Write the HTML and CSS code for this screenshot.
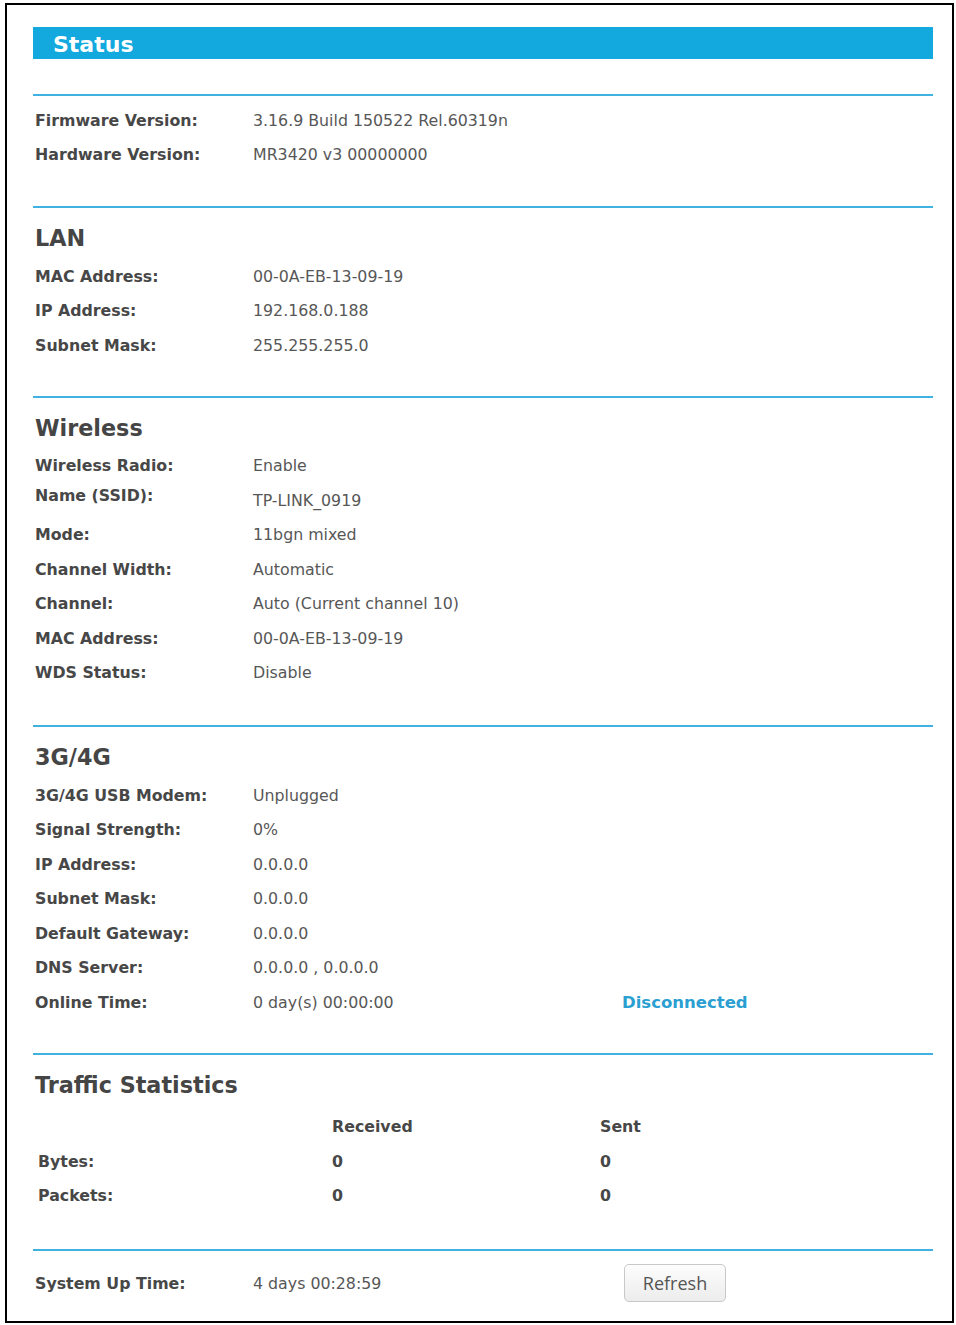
FILE: index.html
```html
<html>
<head><title>Status</title>
<meta content="text/html;charset=utf-8" http-equiv="Content-Type" />
<link rel="stylesheet" href="styles.css">
</head>
<body>
<div class="frame">
	<div class="title-bar">Status</div>

	<div class="section plain">
		<div class="row"><span class="lbl">Firmware Version:</span><span class="val">3.16.9 Build 150522 Rel.60319n</span></div>
		<div class="row"><span class="lbl">Hardware Version:</span><span class="val">MR3420 v3 00000000</span></div>
	</div>

	<div class="section">
		<h2>LAN</h2>
		<div class="row"><span class="lbl">MAC Address:</span><span class="val">00-0A-EB-13-09-19</span></div>
		<div class="row"><span class="lbl">IP Address:</span><span class="val">192.168.0.188</span></div>
		<div class="row"><span class="lbl">Subnet Mask:</span><span class="val">255.255.255.0</span></div>
	</div>

	<div class="section wide">
		<h2>Wireless</h2>
		<div class="row"><span class="lbl">Wireless Radio:</span><span class="val">Enable</span></div>
		<div class="row"><span class="lbl raised">Name (SSID):</span><span class="val">TP-LINK_0919</span></div>
		<div class="row"><span class="lbl">Mode:</span><span class="val">11bgn mixed</span></div>
		<div class="row"><span class="lbl">Channel Width:</span><span class="val">Automatic</span></div>
		<div class="row"><span class="lbl">Channel:</span><span class="val">Auto (Current channel 10)</span></div>
		<div class="row"><span class="lbl">MAC Address:</span><span class="val">00-0A-EB-13-09-19</span></div>
		<div class="row"><span class="lbl">WDS Status:</span><span class="val">Disable</span></div>
	</div>

	<div class="section">
		<h2>3G/4G</h2>
		<div class="row"><span class="lbl">3G/4G USB Modem:</span><span class="val">Unplugged</span></div>
		<div class="row"><span class="lbl">Signal Strength:</span><span class="val">0%</span></div>
		<div class="row"><span class="lbl">IP Address:</span><span class="val">0.0.0.0</span></div>
		<div class="row"><span class="lbl">Subnet Mask:</span><span class="val">0.0.0.0</span></div>
		<div class="row"><span class="lbl">Default Gateway:</span><span class="val">0.0.0.0</span></div>
		<div class="row"><span class="lbl">DNS Server:</span><span class="val">0.0.0.0 , 0.0.0.0</span></div>
		<div class="row"><span class="lbl">Online Time:</span><span class="val">0 day(s) 00:00:00</span><span class="state">Disconnected</span></div>
	</div>

	<div class="section traffic">
		<h2>Traffic Statistics</h2>
		<div class="stats">
			<span></span><span class="lbl">Received</span><span class="lbl">Sent</span>
			<span class="lbl">Bytes:</span><span class="lbl">0</span><span class="lbl">0</span>
			<span class="lbl">Packets:</span><span class="lbl">0</span><span class="lbl">0</span>
		</div>
	</div>

	<div class="section uptime">
		<div class="row"><span class="lbl">System Up Time:</span><span class="val">4 days 00:28:59</span><span><button onclick="location.reload()">Refresh</button></span></div>
	</div>
</div>
</body>
</html>
```

FILE: styles.css
```css
body{
	padding:0;
	margin:0;
	background-color:#fff;
	font-family:"DejaVu Sans", Verdana, sans-serif;
	color:#555;
}

.frame{
	margin:3px 2px 2px 5px;
	border:2px solid #000;
	padding:22px 19px 19px 26px;
}

.title-bar{
	background-color:#13a8de;
	color:#fff;
	font-weight:bold;
	font-size:22px;
	height:30px;
	line-height:32px;
	padding:2px 0 0 20px;
}

.section{
	border-top:2px solid #3fb2e2;
	padding:15px 0 33px 0;
}

.section.plain{
	margin-top:35px;
	padding-top:7px;
	padding-bottom:34px;
}

.section.wide{
	padding-bottom:35px;
}

h2{
	margin:0 0 6px 2px;
	font-size:22.3px;
	line-height:30px;
	color:#454545;
}

.row{
	display:grid;
	grid-template-columns:218px 369px auto;
	align-items:center;
	height:34.5px;
	padding-left:2px;
}

.lbl{
	font-weight:bold;
	font-size:15.8px;
	color:#474747;
}

.lbl.raised{
	margin-bottom:10px;
}

.val{
	font-size:15.8px;
	color:#575757;
}

.state{
	font-weight:bold;
	font-size:16.5px;
	color:#2b9fd1;
}

.stats{
	display:grid;
	grid-template-columns:294px 268px auto;
	grid-auto-rows:34.5px;
	align-items:center;
	margin-top:10px;
	padding-left:5px;
}

.section.traffic{
	padding-bottom:36px;
}

.section.uptime{
	padding:13px 0 0 0;
}

.uptime .row{
	height:38px;
}

button{
	margin-left:2px;
	width:102px;
	height:38px;
	border:1px solid #c8c8c8;
	border-radius:5px;
	background:linear-gradient(#fdfdfd, #ececec);
	font-family:"Open Sans", sans-serif;
	font-size:18px;
	color:#555;
	cursor:pointer;
}
```
